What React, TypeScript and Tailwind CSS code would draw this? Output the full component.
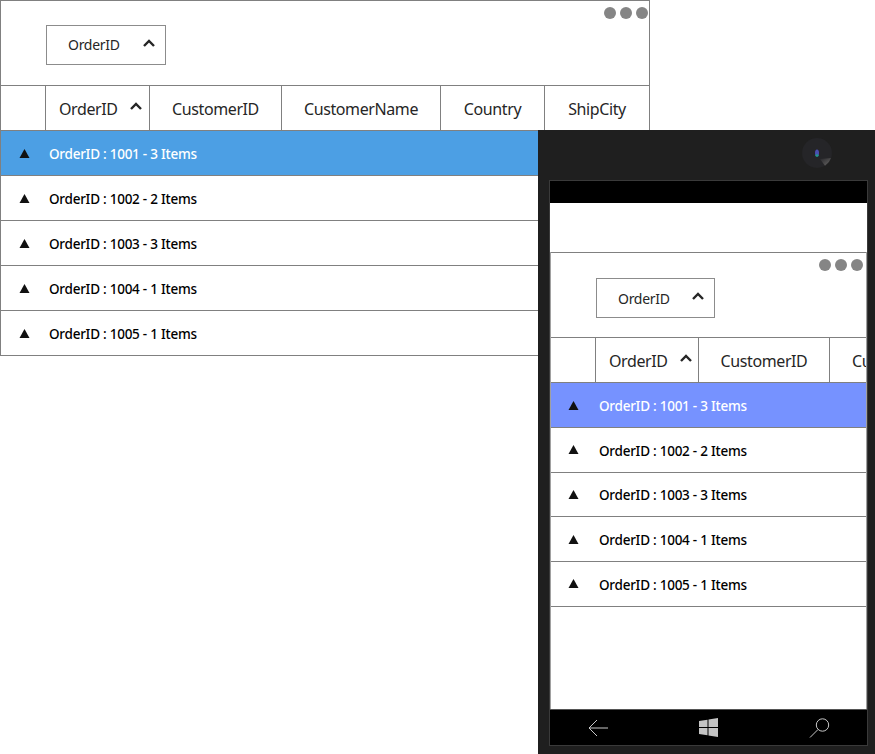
const columns = [
  { title: "OrderID", width: "w-[104px]", phoneWidth: "w-[103px]", sorted: true },
  { title: "CustomerID", width: "w-[132px]", phoneWidth: "w-[131px]" },
  { title: "CustomerName", width: "w-[159px]", phoneWidth: "w-[159px]" },
  { title: "Country", width: "w-[104px]", phoneWidth: "w-[104px]" },
  { title: "ShipCity", width: "w-[106px] border-r", phoneWidth: "w-[105px]" },
]

const groups = [
  { id: 1001, count: 3 },
  { id: 1002, count: 2 },
  { id: 1003, count: 3 },
  { id: 1004, count: 1 },
  { id: 1005, count: 1 },
]

function Chevron({ className }: { className: string }) {
  return (
    <svg viewBox="0 0 12 8" className={className} fill="none" stroke="currentColor" strokeWidth="2.4">
      <path d="M1 7 L6 2 L11 7" />
    </svg>
  )
}

function Grid({ phone }: { phone?: boolean }) {
  const selected = phone ? "bg-[#7692ff] text-white" : "bg-[#4c9fe4] text-white"
  return (
    <div className={phone ? "w-full overflow-hidden" : "w-[650px]"}>
      <div className={`relative h-[85px] border-t border-[#808080] ${phone ? "pt-[25px] pl-[45px]" : "border-x pt-6 pl-[45px]"}`}>
        <div className={`absolute top-[6px] flex gap-1 ${phone ? "right-[3px]" : "right-[1px]"}`}>
          <span className="size-3 rounded-full bg-[#858585]" />
          <span className="size-3 rounded-full bg-[#858585]" />
          <span className="size-3 rounded-full bg-[#858585]" />
        </div>
        <div className={`flex items-center border border-[#8c8c8c] pl-[21px] text-[14px] tracking-[-0.3px] text-[#262626] ${phone ? "h-[40px] w-[119px]" : "h-10 w-[120px]"}`}>
          <span className={phone ? "flex-1" : "mb-px flex-1"}>OrderID</span>
          <Chevron className="mr-[10px] mb-1 h-2 w-3 text-[#262626]" />
        </div>
      </div>
      <div className={`flex border-y border-[#808080] text-[16px] tracking-[-0.4px] text-[#262626] ${phone ? "h-[46.4px]" : "h-[46px]"}`}>
        <div className={phone ? "w-[44px] shrink-0" : "w-[45px] shrink-0 border-l border-[#808080]"} />
        {columns.map((col) => (
          <div
            key={col.title}
            className={`${phone ? col.phoneWidth : col.width} flex shrink-0 items-center border-l border-[#808080] pt-[2px] ${col.sorted ? "pl-[13px]" : "justify-center"}`}
          >
            <span>{col.title}</span>
            {col.sorted && <Chevron className="mb-[6px] ml-[12px] h-2 w-3" />}
          </div>
        ))}
      </div>
      {groups.map((group, index) => (
        <div
          key={group.id}
          className={`${phone ? "h-[44.7px]" : "h-[45px] border-l"} flex items-center border-b border-[#808080] text-[13.5px] font-medium tracking-[-0.25px] ${index === 0 ? selected : "text-black"}`}
        >
          <svg viewBox="0 0 10 9" className={`h-[9px] w-[11px] text-[#111] ${phone ? "ml-[17px]" : "ml-[18px]"}`} fill="currentColor">
            <path d="M5 0 L10 9 L0 9 Z" />
          </svg>
          <span className={`mt-[2px] ${phone ? "ml-5" : "ml-[19px]"}`}>
            OrderID : {group.id} - {group.count} Items
          </span>
        </div>
      ))}
    </div>
  )
}

export default function App() {
  return (
    <div className="relative h-[754px] w-[875px] overflow-hidden bg-white font-['Noto_Sans',sans-serif]">
      <Grid />
      <div className="absolute top-[130px] left-[538px] flex h-[624px] w-[337px] flex-col bg-[#1f1f1f] pt-[50px] pr-[7px] pb-2 pl-[11px]">
        <svg viewBox="0 0 30 30" className="absolute top-2 left-[264px] size-[30px]">
          <defs>
            <linearGradient id="glare" x1="0" y1="0" x2="1" y2="1">
              <stop offset="0" stopColor="#26262a" />
              <stop offset="1" stopColor="#6a6866" />
            </linearGradient>
          </defs>
          <circle cx="15" cy="15" r="15" fill="#252528" />
          <path d="M18 21 L29 20 A15 15 0 0 1 23 27.8 Z" fill="url(#glare)" />
          <ellipse cx="15" cy="15" rx="2" ry="3.5" fill="#4a4fb0" />
          <ellipse cx="15" cy="17.5" rx="1.6" ry="1.2" fill="#1f9a8a" />
        </svg>
        <div className="flex flex-1 flex-col border border-[#3a3a3a]">
          <div className="h-[22px] bg-black" />
          <div className="flex flex-1 flex-col bg-white">
            <div className="h-[49px]" />
            <div className="flex-1 overflow-hidden border-x border-[#a0a0a0]">
              <Grid phone />
            </div>
          </div>
          <div className="flex h-9 items-center justify-between border-t border-[#555] bg-black pr-[37px] pl-[38px]">
            <svg viewBox="0 0 20 18" className="h-[18px] w-5 text-[#c8c8c8]" fill="none" stroke="currentColor">
              <path d="M20 9 H1 M9 1 L1 9 L9 17" />
            </svg>
            <svg viewBox="0 0 19 19" className="size-[19px] text-[#c4c4c4]" fill="currentColor">
              <path d="M0 3 L8.5 1.8 V9 H0 Z M9.5 1.6 L19 0 V9 H9.5 Z M0 10 H8.5 V17.2 L0 16 Z M9.5 10 H19 V19 L9.5 17.4 Z" />
            </svg>
            <svg viewBox="0 0 21 20" className="h-5 w-[21px] text-[#c8c8c8]" fill="none" stroke="currentColor">
              <circle cx="13.5" cy="7" r="6.2" />
              <path d="M9 11.5 L1 19.5" />
            </svg>
          </div>
        </div>
      </div>
    </div>
  )
}
